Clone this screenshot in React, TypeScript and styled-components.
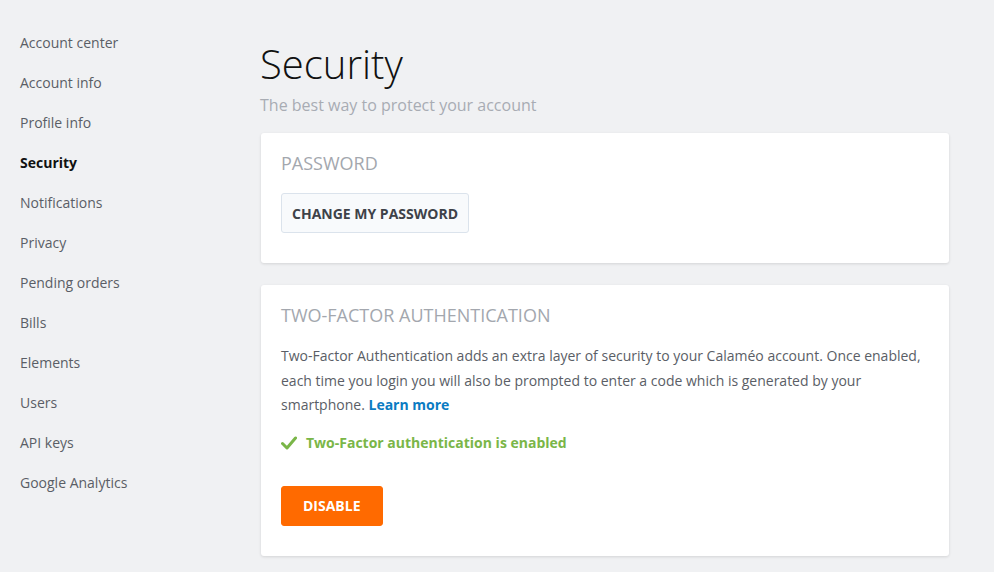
import React from 'react';
import styled, { createGlobalStyle } from 'styled-components';

const GlobalStyle = createGlobalStyle`
  html, body {
    margin: 0;
    padding: 0;
    background: #f0f1f3;
    font-family: 'Open Sans', 'Liberation Sans', sans-serif;
    color: #555a60;
  }
`;

const Page = styled.div`
  display: flex;
  align-items: flex-start;
  min-height: 572px;
`;

const Sidebar = styled.nav`
  width: 260px;
  flex: 0 0 260px;
  padding: 32px 0 0 20px;
  box-sizing: border-box;
  display: flex;
  flex-direction: column;
`;

const NavItem = styled.a<{ $active?: boolean }>`
  display: block;
  height: 40px;
  line-height: 22px;
  font-size: 14px;
  color: ${(p) => (p.$active ? '#111' : '#5a5e66')};
  font-weight: ${(p) => (p.$active ? 700 : 400)};
  text-decoration: none;
  cursor: pointer;
`;

const Main = styled.main`
  flex: 0 0 690px;
  width: 690px;
  padding-top: 38px;
`;

const Title = styled.h1`
  margin: 0;
  font-size: 40px;
  font-weight: 300;
  line-height: 52px;
  color: #111;
`;

const Subtitle = styled.p`
  margin: 4px 0 17px;
  font-size: 16px;
  line-height: 22px;
  color: #a8acb3;
`;

const Card = styled.section`
  background: #fff;
  border-radius: 3px;
  box-shadow: 0 1px 3px rgba(0, 0, 0, 0.12);
  padding: 18px 20px 30px;
  margin-bottom: 22px;
  margin-left: 1px;
  width: 688px;
  box-sizing: border-box;
`;

const CardTitle = styled.h2`
  margin: 0 0 18px;
  font-size: 18px;
  font-weight: 400;
  line-height: 24px;
  color: #a3a7ae;
  text-transform: uppercase;
`;

const Text = styled.p`
  margin: -1px 0 13px;
  font-size: 14px;
  line-height: 24.5px;
  color: #5a5e66;
`;

const Link = styled.a`
  color: #0a7bc2;
  font-weight: 700;
  text-decoration: none;
`;

const Status = styled.div`
  display: flex;
  align-items: center;
  gap: 9px;
  margin-bottom: 31px;
  font-size: 14px;
  font-weight: 700;
  color: #7ab648;
  line-height: 24px;
`;

const Button = styled.button<{ $variant?: 'light' | 'danger' }>`
  height: 40px;
  padding: 0 ${(p) => (p.$variant === 'danger' ? '21px' : '10px')};
  border-radius: 3px;
  font-family: inherit;
  font-size: 14px;
  font-weight: 700;
  text-transform: uppercase;
  cursor: pointer;
  border: 1px solid
    ${(p) => (p.$variant === 'danger' ? '#ff6a00' : '#dbe3ec')};
  background: ${(p) => (p.$variant === 'danger' ? '#ff6a00' : '#f8fafc')};
  color: ${(p) => (p.$variant === 'danger' ? '#fff' : '#3e4249')};
`;

const CheckIcon = () => (
  <svg width="16" height="14" viewBox="0 0 16 14" aria-hidden="true">
    <path
      d="M1.5 7.5 L6 12 L14.5 2"
      fill="none"
      stroke="#7ab648"
      strokeWidth="3"
      strokeLinecap="round"
      strokeLinejoin="round"
    />
  </svg>
);

const navItems = [
  'Account center',
  'Account info',
  'Profile info',
  'Security',
  'Notifications',
  'Privacy',
  'Pending orders',
  'Bills',
  'Elements',
  'Users',
  'API keys',
  'Google Analytics',
];

export default function App() {
  return (
    <>
      <GlobalStyle />
      <Page>
        <Sidebar>
          {navItems.map((item) => (
            <NavItem key={item} $active={item === 'Security'}>
              {item}
            </NavItem>
          ))}
        </Sidebar>
        <Main>
          <Title>Security</Title>
          <Subtitle>The best way to protect your account</Subtitle>
          <Card>
            <CardTitle>Password</CardTitle>
            <Button $variant="light">Change my password</Button>
          </Card>
          <Card>
            <CardTitle>Two-Factor Authentication</CardTitle>
            <Text>
              Two-Factor Authentication adds an extra layer of security to your
              Calaméo account. Once enabled, each time you login you will also
              be prompted to enter a code which is generated by your
              smartphone. <Link>Learn more</Link>
            </Text>
            <Status>
              <CheckIcon />
              Two-Factor authentication is enabled
            </Status>
            <Button $variant="danger">Disable</Button>
          </Card>
        </Main>
      </Page>
    </>
  );
}
